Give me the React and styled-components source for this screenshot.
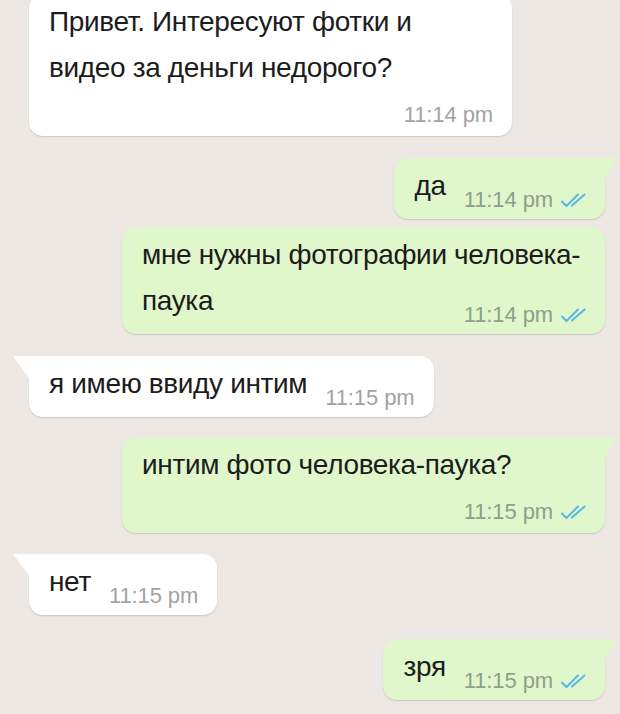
import React from "react";
import styled, { createGlobalStyle, css } from "styled-components";

const GlobalStyle = createGlobalStyle`
  html, body {
    margin: 0;
    padding: 0;
    background: #ede8e3;
  }
  body {
    font-family: "Liberation Sans", Arial, sans-serif;
    overflow: hidden;
  }
`;

const Chat = styled.div`
  width: 620px;
  height: 714px;
  box-sizing: border-box;
  padding: 0 15px 0 29px;
  display: flex;
  flex-direction: column;
  overflow: hidden;
  background: #ede8e3;
`;

const Row = styled.div`
  display: flex;
  justify-content: ${(p) => (p.$out ? "flex-end" : "flex-start")};
  margin-top: ${(p) => p.$gap}px;
`;

const Bubble = styled.div`
  position: relative;
  box-sizing: border-box;
  ${(p) => (p.$wide ? "width: 483px;" : "max-width: 483px;")}
  padding: 5px ${(p) => (p.$out ? 15 : 19)}px 10px 20px;
  border-radius: 14px;
  background: ${(p) => (p.$out ? "#e0f7cb" : "#ffffff")};
  box-shadow: 0 1px 1.5px rgba(0, 0, 0, 0.14);
  display: flex;
  flex-direction: column;

  ${(p) =>
    p.$tail &&
    (p.$out
      ? css`
          border-top-right-radius: 0;
          &::before {
            content: "";
            position: absolute;
            top: 0;
            right: -13px;
            width: 13px;
            height: 20px;
            background: #e0f7cb;
            clip-path: polygon(0 0, 100% 0, 0 100%);
          }
        `
      : css`
          border-top-left-radius: 0;
          &::before {
            content: "";
            position: absolute;
            top: 0;
            left: -16px;
            width: 16px;
            height: 22px;
            background: #ffffff;
            clip-path: polygon(0 0, 100% 0, 100% 100%);
          }
        `)}
`;

const Line = styled.div`
  font-size: 28px;
  line-height: 46px;
  letter-spacing: -0.35px;
  color: #1c1c1c;
  white-space: nowrap;
`;

const LastRow = styled.div`
  display: flex;
  align-items: flex-end;
  gap: 18px;
`;

const Meta = styled.div`
  margin-left: auto;
  display: flex;
  align-items: center;
  gap: 7px;
  height: 22px;
  margin-bottom: ${(p) => (p.$below ? 0 : -2)}px;
  margin-top: ${(p) => (p.$below ? 13 : 0)}px;
  flex-shrink: 0;
`;

const Time = styled.span`
  font-size: 22px;
  line-height: 22px;
  letter-spacing: -0.1px;
  color: ${(p) => (p.$out ? "#8ca08a" : "#a3a3a3")};
  white-space: nowrap;
`;

const Ticks = styled.svg`
  width: 30px;
  height: 16px;
  display: block;
`;

const DoubleCheck = () => (
  <Ticks viewBox="0 0 30 16" fill="none">
    <path
      d="M2 9.5 L6.5 14 L18 2.5"
      stroke="#58b6e8"
      strokeWidth="2"
      strokeLinecap="round"
      strokeLinejoin="round"
    />
    <path
      d="M12 13.5 L24.5 2.5"
      stroke="#58b6e8"
      strokeWidth="2"
      strokeLinecap="round"
      strokeLinejoin="round"
    />
  </Ticks>
);

const messages = [
  {
    out: false,
    lines: ["Привет. Интересуют фотки и", "видео за деньги недорого?"],
    time: "11:14 pm",
    below: true,
    wide: true,
    tail: false,
    gap: -6,
  },
  { out: true, lines: ["да"], time: "11:14 pm", tail: true, gap: 22 },
  {
    out: true,
    lines: ["мне нужны фотографии человека-", "паука"],
    time: "11:14 pm",
    wide: true,
    tail: false,
    gap: 8,
  },
  { out: false, lines: ["я имею ввиду интим"], time: "11:15 pm", tail: true, gap: 22 },
  {
    out: true,
    lines: ["интим фото человека-паука?"],
    time: "11:15 pm",
    below: true,
    wide: true,
    tail: true,
    gap: 20,
  },
  { out: false, lines: ["нет"], time: "11:15 pm", tail: true, gap: 21 },
  { out: true, lines: ["зря"], time: "11:15 pm", tail: true, gap: 24 },
];

const MetaInfo = ({ m }) => (
  <Meta $below={m.below}>
    <Time $out={m.out}>{m.time}</Time>
    {m.out && <DoubleCheck />}
  </Meta>
);

const Message = ({ m }) => {
  const head = m.lines.slice(0, -1);
  const last = m.lines[m.lines.length - 1];
  return (
    <Row $out={m.out} $gap={m.gap}>
      <Bubble $out={m.out} $wide={m.wide} $tail={m.tail}>
        {head.map((l, i) => (
          <Line key={i}>{l}</Line>
        ))}
        {m.below ? (
          <>
            <Line>{last}</Line>
            <MetaInfo m={m} />
          </>
        ) : (
          <LastRow>
            <Line>{last}</Line>
            <MetaInfo m={m} />
          </LastRow>
        )}
      </Bubble>
    </Row>
  );
};

export default function App() {
  return (
    <>
      <GlobalStyle />
      <Chat>
        {messages.map((m, i) => (
          <Message key={i} m={m} />
        ))}
      </Chat>
    </>
  );
}
